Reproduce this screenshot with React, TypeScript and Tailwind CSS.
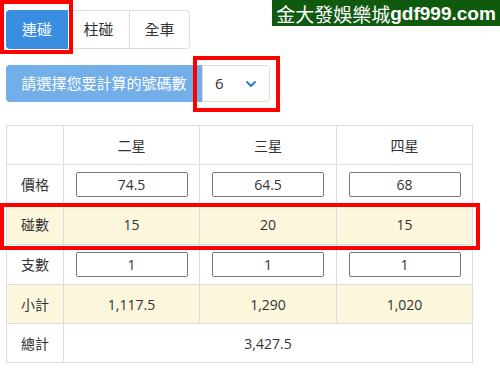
import { ChevronDown } from 'lucide-react'

const cols = ['二星', '三星', '四星']
const prices = ['74.5', '64.5', '68']
const hits = ['15', '20', '15']
const counts = ['1', '1', '1']
const subtotals = ['1,117.5', '1,290', '1,020']

export default function App() {
  return (
    <div
      className="relative w-[500px] h-[373px] bg-white pl-[6px] pt-[10px] text-[#333]"
      style={{ fontFamily: '"Open Sans", "Noto Sans CJK TC", sans-serif' }}
    >
      {/* mode tabs */}
      <div className="flex h-[39px] text-[15px]">
        <button className="w-[62px] bg-[#3a8ee2] text-white rounded-l-[4px]">連碰</button>
        <button className="w-[62px] border border-[#ddd] border-l-0">柱碰</button>
        <button className="w-[60px] border border-[#ddd] border-l-0 rounded-r-[4px]">全車</button>
      </div>

      {/* number select */}
      <div className="flex h-[37px] mt-[16px] text-[15px]">
        <div className="w-[196px] bg-[#72aee7] text-white rounded-l-[4px] flex items-center justify-center">
          請選擇您要計算的號碼數
        </div>
        <div className="w-[68px] border border-[#ddd] rounded-r-[4px] flex items-center justify-between pl-[12px] pr-[10px]">
          <span>6</span>
          <ChevronDown className="w-[16px] h-[16px] text-[#2f7fd0]" strokeWidth={3} />
        </div>
      </div>

      {/* table */}
      <table className="mt-[23px] w-[466px] border-collapse text-[14px] text-center table-fixed">
        <colgroup>
          <col className="w-[57px]" />
          <col className="w-[136px]" />
          <col className="w-[137px]" />
          <col className="w-[136px]" />
        </colgroup>
        <tbody>
          <tr className="h-[39px]">
            <td className="border border-[#ddd]"></td>
            {cols.map((c) => (
              <td key={c} className="border border-[#ddd]">{c}</td>
            ))}
          </tr>
          <tr className="h-[40px]">
            <td className="border border-[#ddd]">價格</td>
            {prices.map((p, i) => (
              <td key={i} className="border border-[#ddd]">
                <div className="mx-auto w-[112px] h-[25px] border border-[#777] rounded-[2px] flex items-center justify-center">
                  {p}
                </div>
              </td>
            ))}
          </tr>
          <tr className="h-[40px] bg-[#fcf6dc]">
            <td className="border border-[#ddd]">碰數</td>
            {hits.map((h, i) => (
              <td key={i} className="border border-[#ddd]">{h}</td>
            ))}
          </tr>
          <tr className="h-[40px]">
            <td className="border border-[#ddd]">支數</td>
            {counts.map((c, i) => (
              <td key={i} className="border border-[#ddd]">
                <div className="mx-auto w-[112px] h-[25px] border border-[#777] rounded-[2px] flex items-center justify-center">
                  {c}
                </div>
              </td>
            ))}
          </tr>
          <tr className="h-[39px] bg-[#fcf6dc]">
            <td className="border border-[#ddd]">小計</td>
            {subtotals.map((s, i) => (
              <td key={i} className="border border-[#ddd]">{s}</td>
            ))}
          </tr>
          <tr className="h-[39px]">
            <td className="border border-[#ddd]">總計</td>
            <td colSpan={3} className="border border-[#ddd]">3,427.5</td>
          </tr>
        </tbody>
      </table>

      {/* watermark */}
      <div className="absolute top-0 right-0 w-[228px] h-[26px] bg-[#0f5a0f] text-white flex items-center justify-center text-[19px] leading-none whitespace-nowrap">
        <span style={{ fontFamily: '"Noto Sans CJK TC", sans-serif' }}>金大發娛樂城</span>
        <span className="font-bold" style={{ fontFamily: '"Liberation Sans", sans-serif' }}>gdf999.com</span>
      </div>

      {/* highlight boxes */}
      <div className="absolute left-0 top-0 w-[73px] h-[54px] border-[4px] border-[#f00]" />
      <div className="absolute left-[193px] top-[56px] w-[87px] h-[56px] border-[4px] border-[#f00]" />
      <div className="absolute left-0 top-[203px] w-[480px] h-[47px] border-[4px] border-[#f00]" />
    </div>
  )
}
